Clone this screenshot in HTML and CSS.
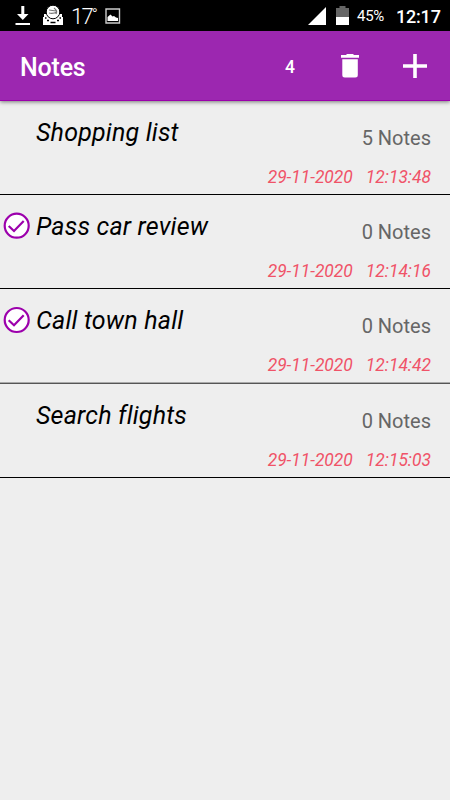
FILE: index.html
```html
<!DOCTYPE html>
<html lang="en">
<head>
    <meta charset="UTF-8">
    <title>Notes</title>
    <link rel="stylesheet" href="styles.css">
</head>
<body>
    <div class="status">
        <svg class="download" width="16" height="20" viewBox="0 0 16 20">
            <path d="M6.300 0h3v8h4.200L7.800 14 2 8h4.300zM.5 17h14.500v2H.5z" fill="#fff"/>
        </svg>
        <svg class="news" width="22" height="21" viewBox="0 0 22 21">
            <path d="M2 9h18v3h1v8H1v-8h1z" fill="#fff"/>
            <circle cx="11" cy="7" r="6.800" fill="#fff" stroke="#000" stroke-width="1"/>
            <path d="M7 5l7 1M7 8q4 1 8-1M12 3q4 3 2 6" fill="none" stroke="#777" stroke-width="1.200"/>
            <path d="M3 13h1.500M5 15.500h2M15 15.500h2M17.500 13H19M8.500 17.500h5" stroke="#000" stroke-width="1.500"/>
        </svg>
        <span class="temp">17<sup>°</sup></span>
        <svg class="picture" width="16" height="16" viewBox="0 0 16 16">
            <path d="M1 1h13.500v14H1z" fill="none" stroke="#ccc" stroke-width="1.400"/>
            <path d="M2.500 13v-4l3-2.500 2 2 1.500-.5 2 1.500 2 .5v3z" fill="#fff"/>
        </svg>
        <svg class="signal" width="18" height="18" viewBox="0 0 18 18">
            <path d="M0 18L18 0v18z" fill="#fff"/>
        </svg>
        <svg class="battery" width="13" height="19" viewBox="0 0 13 19">
            <path d="M0 2h3.500V0h6v2H13v9H0z" fill="#666"/>
            <path d="M0 11h13v8H0z" fill="#fff"/>
        </svg>
        <span class="percent">45%</span>
        <span class="clock">12:17</span>
    </div>
    <header>
        <h1>Notes</h1>
        <span class="count">4</span>
        <svg class="trash" width="20" height="26" viewBox="0 0 20 26">
            <path d="M1 2h5l1-1h6l1 1h5v2.700H1zM2.300 6.300h15.500V22q0 2.500-2.500 2.500H4.800q-2.500 0-2.500-2.500z" fill="#fff"/>
        </svg>
        <svg class="add" width="24" height="24" viewBox="0 0 24 24">
            <path d="M12 0v24M0 12h24" stroke="#fff" stroke-width="3.600"/>
        </svg>
    </header>
    <ul class="list">
        <li class="note">
            <div class="mark"></div>
            <h2>Shopping list</h2>
            <div class="info">
                <p class="total">5 Notes</p>
                <p class="date"><span>29-11-2020</span><span>12:13:48</span></p>
            </div>
        </li>
        <li class="note">
            <div class="mark">
                <svg width="28" height="28" viewBox="0 0 28 28">
                    <circle cx="13.700" cy="13.700" r="12" fill="#fff" stroke="#9c00ac" stroke-width="2.200"/>
                    <path d="M5.700 14l5.300 5L20.700 9" fill="none" stroke="#9c00ac" stroke-width="2.200"/>
                </svg>
            </div>
            <h2>Pass car review</h2>
            <div class="info">
                <p class="total">0 Notes</p>
                <p class="date"><span>29-11-2020</span><span>12:14:16</span></p>
            </div>
        </li>
        <li class="note soft">
            <div class="mark">
                <svg width="28" height="28" viewBox="0 0 28 28">
                    <circle cx="13.700" cy="14" r="12" fill="#fff" stroke="#9c00ac" stroke-width="2.200"/>
                    <path d="M5.700 14.300l5.300 5L20.700 9.300" fill="none" stroke="#9c00ac" stroke-width="2.200"/>
                </svg>
            </div>
            <h2>Call town hall</h2>
            <div class="info">
                <p class="total">0 Notes</p>
                <p class="date"><span>29-11-2020</span><span>12:14:42</span></p>
            </div>
        </li>
        <li class="note">
            <div class="mark"></div>
            <h2>Search flights</h2>
            <div class="info">
                <p class="total">0 Notes</p>
                <p class="date"><span>29-11-2020</span><span>12:15:03</span></p>
            </div>
        </li>
    </ul>
</body>
</html>
```
FILE: styles.css
```css
*{
    margin: 0;
    padding: 0;
    box-sizing: border-box;
}
html,body{
    height: 100%;
}
body{
    background-color: #eee;
    font-family: Roboto, sans-serif;
    overflow: hidden;
}
.status{
    display: flex;
    align-items: flex-start;
    height: 31px;
    padding: 0 10px 0 15px;
    background-color: black;
    color: white;
}
.status svg{
    flex: none;
}
.download{
    margin-top: 6px;
}
.news{
    margin: 5px 0 0 11px;
}
.temp{
    width: 24px;
    margin: 4px 0 0 7px;
    font-size: 22px;
    font-weight: 300;
    line-height: 26px;
    letter-spacing: -1.8px;
    white-space: nowrap;
}
.temp sup{
    font-size: 16px;
    line-height: 0;
    vertical-align: 4px;
}
.picture{
    margin: 8px 0 0 10px;
}
.signal{
    margin: 7px 0 0 auto;
}
.battery{
    margin: 6px 0 0 10px;
}
.percent{
    width: 28px;
    margin: 7px 0 0 8px;
    font-size: 15px;
    line-height: 18px;
    letter-spacing: -0.3px;
}
.clock{
    width: 44px;
    margin: 6px 0 0 11px;
    font-size: 18px;
    font-weight: 500;
    line-height: 22px;
    letter-spacing: -0.2px;
}
header{
    position: relative;
    display: flex;
    align-items: center;
    height: 70px;
    padding: 0 23px 0 20px;
    background-color: #9c27b0;
    border-bottom: 1px solid #9c00ac;
    box-shadow: 0 1px 4px rgba(0, 0, 0, 0.5);
    color: white;
}
header h1{
    flex: 1;
    padding-top: 4px;
    font-size: 25px;
    font-weight: 500;
    letter-spacing: -0.2px;
}
.count{
    padding-top: 3px;
    font-size: 17.5px;
    font-weight: 500;
}
.trash{
    margin-left: 45px;
}
.add{
    margin-left: 43px;
}
.list{
    list-style: none;
}
.note{
    display: flex;
    height: 94px;
    padding-right: 19px;
    border-bottom: 1px solid black;
}
.soft{
    height: 95px;
    border-bottom: 1px solid #555;
    box-shadow: inset 0 -1px #aaa;
}
.mark{
    width: 36px;
    padding: 17px 0 0 3px;
}
.note h2{
    flex: 1;
    padding-top: 17px;
    font-size: 25px;
    font-style: italic;
    font-weight: 400;
    line-height: 30px;
    letter-spacing: 0.2px;
    font-variant-ligatures: none;
}
.info{
    text-align: right;
}
.total{
    padding-top: 24px;
    color: #666;
    font-size: 20px;
    line-height: 26px;
}
.date{
    display: flex;
    gap: 13px;
    padding-top: 15px;
    color: #f05368;
    font-size: 17.4px;
    font-style: italic;
    line-height: 22px;
}
```
